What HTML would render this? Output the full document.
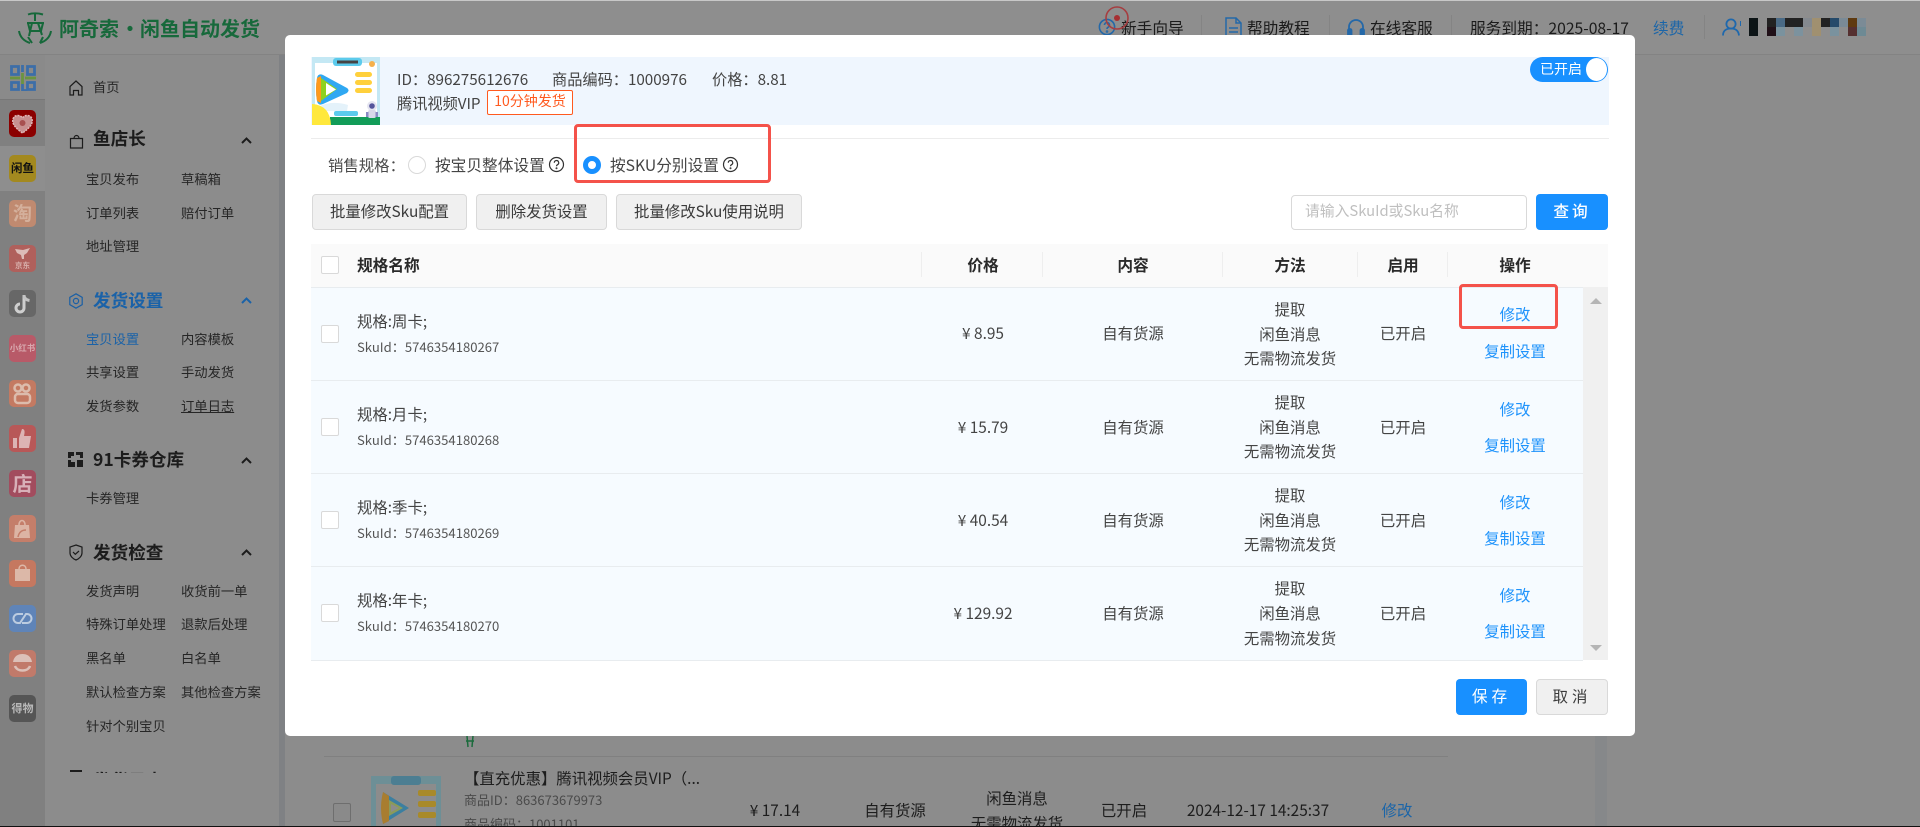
<!DOCTYPE html>
<html lang="zh">
<head>
<meta charset="utf-8">
<title>阿奇索 · 闲鱼自动发货</title>
<style>
*{box-sizing:border-box}
html,body{margin:0;padding:0;width:1920px;height:827px;overflow:hidden;background:#8c8c8c}
body{position:relative;font-family:"Noto Sans CJK SC","Liberation Sans","WenQuanYi Zen Hei",sans-serif;color:#2b2b2b}
.a{position:absolute}
.t{position:absolute;white-space:nowrap;line-height:20px;height:20px}
.c{transform:translateX(-50%)}
.side{font-size:13.3px;color:#262626;margin-top:-1px}
.h{font-size:17.6px;font-weight:700;color:#1c1c1c;margin-top:-2px}
.i{position:absolute;left:9px;width:27px;height:27px;border-radius:5px;font-weight:700;text-align:center;overflow:hidden}
.hd{font-size:15.7px;color:#1b1b1b;margin-top:-1px}
.m{font-size:15.4px;color:#444}
.b{font-size:15.4px;color:#1f93fb}
.th{font-size:15.7px;font-weight:700;color:#2a2a2a}
.cb{position:absolute;left:321px;width:18px;height:18px;background:#fff;border:1px solid #d9d9d9;border-radius:2px}
.rowline{position:absolute;left:311px;width:1272px;height:1px;background:#e8ecef}
.btn{position:absolute;background:#f0f0f0;border:1px solid #d9d9d9;border-radius:4px;font-size:15.4px;color:#3a3a3a;text-align:center;line-height:32px;height:36px}
.thv{position:absolute;top:252px;width:1px;height:25px;background:#eeeeee}
.sku{font-size:13.1px;color:#555}
</style>
</head>
<body>
<div class="a" style="left:0;top:0;width:1920px;height:1px;background:#c8c8c8"></div>

<!-- header -->
<div class="a" style="left:0;top:1px;width:1920px;height:53px;background:#8e8e8e"></div>
<div class="a" style="left:0;top:54px;width:1920px;height:1px;background:#838383"></div>
<svg class="a" style="left:18px;top:12px" width="34" height="34" viewBox="0 0 34 34" fill="none" stroke="#16683a" stroke-width="2">
<path d="M10 2.500C14 1 20 1 25 2.500"/><path d="M17 2v7"/><path d="M9 11h17"/><path d="M10 11l2 8h11l2-8"/>
<path d="M14 11l-3 13"/><path d="M20 11l4 12"/><path d="M1 19c1 6 5 10 11 12"/><path d="M33 19c-1 6-5 10-11 12"/><path d="M10 25l4 6"/><path d="M25 25l-3 6"/>
</svg>
<div class="t" style="left:59px;top:18px;font-size:20px;font-weight:700;color:#17693b">阿奇索</div>
<div class="t" style="left:120px;top:18px;width:20px;text-align:center;font-size:20px;font-weight:700;color:#17693b">·</div>
<div class="t" style="left:140px;top:18px;font-size:20px;font-weight:700;color:#17693b">闲鱼自动发货</div>

<svg class="a" style="left:1098px;top:18px" width="20" height="20" viewBox="0 0 20 20" fill="none" stroke="#2468a8" stroke-width="1.600"><circle cx="9" cy="9" r="7.600"/><path d="M6.500 7a2.500 2.500 0 1 1 3.500 2.300c-.8.400-1 .8-1 1.700"/><circle cx="9" cy="13.500" r=".5"/></svg>
<div class="t hd" style="left:1121px;top:19px">新手向导</div>
<svg class="a" style="left:1103px;top:4px" width="28" height="28" viewBox="0 0 28 28" fill="none"><circle cx="14" cy="14" r="11" stroke="#a63d40" stroke-width="1.600"/><circle cx="14" cy="14" r="3" fill="#a62f32"/></svg>
<div class="a" style="left:1201px;top:15px;width:1px;height:24px;background:#848484"></div>
<svg class="a" style="left:1225px;top:17px" width="17" height="21" viewBox="0 0 17 21" fill="none" stroke="#2468a8" stroke-width="1.500"><path d="M1 1h10l5 5v14H1z"/><path d="M11 1v5h5"/><path d="M4 11h9M4 15h9"/></svg>
<div class="t hd" style="left:1247px;top:19px">帮助教程</div>
<div class="a" style="left:1329px;top:15px;width:1px;height:24px;background:#848484"></div>
<svg class="a" style="left:1347px;top:18px" width="18" height="20" viewBox="0 0 18 20" fill="none" stroke="#2468a8" stroke-width="1.800"><path d="M2 13V9a7 7 0 0 1 14 0v4"/><rect x="1" y="11" width="3.500" height="7" rx="1.400" fill="#2468a8"/><rect x="13.500" y="11" width="3.500" height="7" rx="1.400" fill="#2468a8"/></svg>
<div class="t hd" style="left:1370px;top:19px">在线客服</div>
<div class="a" style="left:1451px;top:15px;width:1px;height:24px;background:#848484"></div>
<div class="t hd" style="left:1470px;top:19px">服务到期：2025-08-17</div>
<div class="t hd" style="left:1653px;top:19px;color:#1b65a8">续费</div>
<div class="a" style="left:1704px;top:15px;width:1px;height:24px;background:#848484"></div>
<svg class="a" style="left:1722px;top:18px" width="20" height="18" viewBox="0 0 20 18" fill="none" stroke="#1e68ad" stroke-width="1.800"><circle cx="9" cy="6" r="4.600"/><path d="M1 17.500c0-5 3.500-7 8-7s7.500 2 8 7"/><path d="M18.500 3v5" stroke-width="1"/></svg>
<div class="a" style="left:1749px;top:18px;width:9px;height:18px;background:#0c1416"></div>
<div class="a" style="left:1767px;top:18px;width:9px;height:9px;background:#222"></div>
<div class="a" style="left:1767px;top:27px;width:9px;height:9px;background:#201018"></div>
<div class="a" style="left:1776px;top:18px;width:9px;height:9px;background:#4a6a85"></div>
<div class="a" style="left:1776px;top:27px;width:9px;height:9px;background:#7a929e"></div>
<div class="a" style="left:1785px;top:18px;width:18px;height:9px;background:#222"></div>
<div class="a" style="left:1794px;top:27px;width:9px;height:9px;background:#7c929e"></div>
<div class="a" style="left:1803px;top:18px;width:9px;height:9px;background:#84898f"></div>
<div class="a" style="left:1812px;top:18px;width:9px;height:18px;background:#a09070"></div>
<div class="a" style="left:1821px;top:18px;width:9px;height:9px;background:#222"></div>
<div class="a" style="left:1830px;top:18px;width:9px;height:9px;background:#254a6a"></div>
<div class="a" style="left:1830px;top:27px;width:9px;height:9px;background:#7a929e"></div>
<div class="a" style="left:1839px;top:18px;width:9px;height:9px;background:#7a8a96"></div>
<div class="a" style="left:1848px;top:18px;width:9px;height:9px;background:#5f3a10"></div>
<div class="a" style="left:1848px;top:27px;width:9px;height:9px;background:#553030"></div>
<div class="a" style="left:1857px;top:18px;width:9px;height:9px;background:#7b8b96"></div>
<div class="a" style="left:1857px;top:27px;width:9px;height:9px;background:#6e8a94"></div>

<!-- left icon rail -->
<div class="a" style="left:0;top:55px;width:45px;height:772px;background:#808080"></div>
<div class="a" style="left:0;top:55px;width:45px;height:45px;background:#8a8a8a;border-bottom:1px solid #777"></div>
<div class="a" style="left:0;top:146px;width:45px;height:45px;background:#8e8e8e"></div>
<div class="a" style="left:279px;top:55px;width:6px;height:772px;background:#7f8184"></div>
<div class="a" style="left:1595px;top:55px;width:12px;height:772px;background:#86888a"></div>

<svg class="a" style="left:10px;top:65px" width="26" height="26" viewBox="0 0 26 26" fill="none" stroke-width="2.800"><path stroke="#3c6ea8" d="M1.500 1.500h7v8h-7zM12.500 0v7M17.500 1.500h7v8h-7z"/><path stroke="#6a9440" d="M0 13h10M15 13h11M12.500 8v11"/><path stroke="#3c6ea8" d="M1.500 17.500h7v7h-7zM12.500 19v6.500h5M17.500 17.500h7v7h-7z"/></svg>

<div class="i" style="top:110px;background:#8b0000"><svg width="27" height="27" viewBox="0 0 27 27"><path d="M13.500 23C5 17 3 13 4 9c1-4 7-5 9.500-1C16 4 22 5 23 9c1 4-1 8-9.500 14z" fill="#c89090" stroke="#e0b8b8" stroke-width="1.500" stroke-dasharray="2 1"/><circle cx="13.500" cy="13" r="3" fill="#a85050"/></svg></div>
<div class="i" style="top:155px;background:#a3891f;color:#111;font-size:11.500px;line-height:27px">闲鱼</div>
<div class="i" style="top:200px;background:#c08a70;font-size:19px;line-height:26px;color:#d4b09c">淘</div>
<div class="i" style="top:245px;background:#b0605c;font-size:7.500px;padding-top:15px;line-height:11px;color:#d8b0ac">京东<svg class="a" style="left:5px;top:2px" width="17" height="13" viewBox="0 0 17 13"><path d="M1 2l8 1 7-2-3 5-3 2v4H8L7 8 3 6z" fill="#dcbcb8"/></svg></div>
<div class="i" style="top:290px;background:#676767"><svg width="27" height="27" viewBox="0 0 27 27" fill="none"><path d="M15 5v13a4 4 0 1 1-4-4" stroke="#cfcfcf" stroke-width="3"/><path d="M15 5c0 3 2 5 5.500 5.500" stroke="#c4c4c4" stroke-width="3"/></svg></div>
<div class="i" style="top:335px;background:#b85a68;font-size:8.500px;line-height:27px;color:#d8a8ae">小红书</div>
<div class="i" style="top:380px;background:#c47a62"><svg width="27" height="27" viewBox="0 0 27 27" fill="none" stroke="#dcbcac" stroke-width="2.500"><circle cx="9" cy="8" r="3.500"/><circle cx="17" cy="8" r="3.500"/><rect x="6" y="14" width="15" height="9" rx="3"/></svg></div>
<div class="i" style="top:425px;background:#b85858"><svg width="27" height="27" viewBox="0 0 27 27" fill="#dcb4b4"><rect x="4" y="13" width="4" height="10"/><path d="M10 13l3-9c3 0 3 3 2 7h7l-2 12H10z"/></svg></div>
<div class="i" style="top:470px;background:#a24c5e;font-size:20px;line-height:26px;color:#d8b0b8">店</div>
<div class="i" style="top:515px;background:#c47e6a"><svg width="27" height="27" viewBox="0 0 27 27" fill="none"><path d="M6 10h14l1 13H5z" fill="#dcb4a4"/><path d="M10 10c0-6 6-6 6 0" stroke="#dcb4a4" stroke-width="1.600"/><path d="M9 22c1-5 4-7 8-7" stroke="#c47e6a" stroke-width="1.500"/></svg></div>
<div class="i" style="top:560px;background:#c57860"><svg width="27" height="27" viewBox="0 0 27 27" fill="#dcb8a8"><path d="M6 9h15v12H6z"/><path d="M10 9c0-5 7-5 7 0" fill="none" stroke="#dcb8a8" stroke-width="1.500"/></svg></div>
<div class="i" style="top:605px;background:#5f84b8"><svg width="27" height="27" viewBox="0 0 27 27" fill="none" stroke="#bccce0" stroke-width="2"><path d="M14 9H9a4.500 4.500 0 0 0 0 9h2l6-9h1a4.500 4.500 0 0 1 0 9h-5"/></svg></div>
<div class="i" style="top:650px;background:#c17a6a"><svg width="27" height="27" viewBox="0 0 27 27" fill="none"><path d="M4 12c1-6 5-8 9.500-8S22 6 23 12z" fill="#dcc0b8"/><path d="M6 16c2 6 13 6 15 0" stroke="#dcc0b8" stroke-width="2.500"/></svg></div>
<div class="i" style="top:695px;background:#555;font-size:11px;line-height:26px;color:#b8b8b8">得物</div>

<!-- side menu -->
<svg class="a" style="left:68px;top:80px" width="16" height="16" viewBox="0 0 16 16" fill="none" stroke="#1c1c1c" stroke-width="1.200"><path d="M2 15V6.500L8 1l6 5.500V15h-3.500v-4.500h-5V15z"/></svg>
<div class="t side" style="left:93px;top:78px">首页</div>

<svg class="a" style="left:69px;top:134px" width="15" height="15" viewBox="0 0 15 15" fill="none" stroke="#1c1c1c" stroke-width="1.200"><path d="M1.500 4.500h12V14h-12z"/><path d="M5 4.500c0-4 5-4 5 0"/></svg>
<div class="t h" style="left:93px;top:131px">鱼店长</div>
<svg class="a" style="left:241px;top:137px" width="11" height="7" viewBox="0 0 11 7" fill="none" stroke="#1c1c1c" stroke-width="2"><path d="M1 6l4.500-4.500L10 6"/></svg>
<div class="t side" style="left:86px;top:170px">宝贝发布</div><div class="t side" style="left:181px;top:170px">草稿箱</div>
<div class="t side" style="left:86px;top:204px">订单列表</div><div class="t side" style="left:181px;top:204px">赔付订单</div>
<div class="t side" style="left:86px;top:237px">地址管理</div>

<svg class="a" style="left:68px;top:293px" width="16" height="16" viewBox="0 0 16 16" fill="none" stroke="#1a5fa5" stroke-width="1.200"><path d="M8 .8l6.200 3.600v7.200L8 15.200 1.800 11.600V4.400z"/><circle cx="8" cy="8" r="2.600"/></svg>
<div class="t h" style="left:93px;top:293px;color:#1a62a8">发货设置</div>
<svg class="a" style="left:241px;top:297px" width="11" height="7" viewBox="0 0 11 7" fill="none" stroke="#1a62a8" stroke-width="2"><path d="M1 6l4.500-4.500L10 6"/></svg>
<div class="t side" style="left:86px;top:330px;color:#1a62a8">宝贝设置</div><div class="t side" style="left:181px;top:330px">内容模板</div>
<div class="t side" style="left:86px;top:363px">共享设置</div><div class="t side" style="left:181px;top:363px">手动发货</div>
<div class="t side" style="left:86px;top:397px">发货参数</div><div class="t side" style="left:181px;top:397px;text-decoration:underline">订单日志</div>

<svg class="a" style="left:68px;top:452px" width="15" height="15" viewBox="0 0 15 15" fill="#1c1c1c"><path d="M0 0h6v4H3v2H0zM8 0h7v6h-3V3H8zM0 8h3v2h4v5H0zM9 8h6v7H9z"/></svg>
<div class="t h" style="left:93px;top:452px">91卡券仓库</div>
<svg class="a" style="left:241px;top:457px" width="11" height="7" viewBox="0 0 11 7" fill="none" stroke="#1c1c1c" stroke-width="2"><path d="M1 6l4.500-4.500L10 6"/></svg>
<div class="t side" style="left:86px;top:489px">卡券管理</div>

<svg class="a" style="left:69px;top:544px" width="14" height="17" viewBox="0 0 14 17" fill="none" stroke="#1c1c1c" stroke-width="1.200"><path d="M7 1l6 2v6c0 3-3 6-6 7-3-1-6-4-6-7V3z"/><path d="M4 8l2.300 2.300L10 7"/></svg>
<div class="t h" style="left:93px;top:545px">发货检查</div>
<svg class="a" style="left:241px;top:549px" width="11" height="7" viewBox="0 0 11 7" fill="none" stroke="#1c1c1c" stroke-width="2"><path d="M1 6l4.500-4.500L10 6"/></svg>
<div class="t side" style="left:86px;top:582px">发货声明</div><div class="t side" style="left:181px;top:582px">收货前一单</div>
<div class="t side" style="left:86px;top:615px">特殊订单处理</div><div class="t side" style="left:181px;top:615px">退款后处理</div>
<div class="t side" style="left:86px;top:649px">黑名单</div><div class="t side" style="left:181px;top:649px">白名单</div>
<div class="t side" style="left:86px;top:683px">默认检查方案</div><div class="t side" style="left:181px;top:683px">其他检查方案</div>
<div class="t side" style="left:86px;top:717px">针对个别宝贝</div>
<div class="a" style="left:60px;top:768px;width:200px;height:5px;overflow:hidden"><div class="t h" style="left:33px;top:3px;margin-top:0">发货日志</div><div class="a" style="left:10px;top:2px;width:12px;height:2px;background:#1c1c1c"></div></div>

<!-- background list -->
<svg class="a" style="left:464px;top:736px" width="12" height="12" viewBox="0 0 12 12" fill="none" stroke="#1b6b3c" stroke-width="1.500"><path d="M3 0l1 11M9 0L8 11M2 5h8"/></svg>
<div class="a" style="left:324px;top:756px;width:1124px;height:1px;background:#808080"></div>
<div class="a" style="left:333px;top:803px;width:18px;height:19px;background:#8a8a8a;border:1px solid #6e6e6e;border-radius:2px"></div>
<svg class="a" style="left:371px;top:776px" width="70" height="51" viewBox="0 0 70 51"><rect width="70" height="51" fill="#6d8f96"/><rect x="5" y="8" width="60" height="43" fill="#8c8c8c"/><rect x="20" y="0" width="30" height="9" rx="3" fill="#4c7e92"/><path d="M12 16l26 16-26 16z" fill="#3c7fa0"/><path d="M12 16q-4 16 0 32l6-3V20z" fill="#a87d30"/><path d="M18 24l14 8-14 8z" fill="#8b9a5a"/><path d="M20 28l8 4-8 4z" fill="#8c8c8c"/><rect x="47" y="14" width="18" height="6" rx="2" fill="#a88a2a"/><rect x="47" y="25" width="18" height="6" rx="2" fill="#a88a2a"/><rect x="47" y="36" width="18" height="6" rx="2" fill="#a88a2a"/></svg>
<div class="t" style="left:464px;top:768px;font-size:15.400px;color:#1d1d1d">【直充优惠】腾讯视频会员VIP（...</div>
<div class="t" style="left:464px;top:790px;font-size:13px;color:#4a4a4a">商品ID：863673679973</div>
<div class="t" style="left:464px;top:814px;font-size:13px;color:#4a4a4a">商品编码：1001101</div>
<div class="t m c" style="left:775px;top:800px;color:#1d1d1d">¥ 17.14</div>
<div class="t m c" style="left:895px;top:800px;color:#1d1d1d">自有货源</div>
<div class="t m c" style="left:1017px;top:788px;color:#1d1d1d">闲鱼消息</div>
<div class="t m c" style="left:1017px;top:813px;color:#1d1d1d">无需物流发货</div>
<div class="t m c" style="left:1124px;top:800px;color:#1d1d1d">已开启</div>
<div class="t m c" style="left:1258px;top:800px;color:#1d1d1d">2024-12-17 14:25:37</div>
<div class="t c" style="left:1397px;top:800px;font-size:15.400px;color:#1b65a8">修改</div>

<!-- bottom edge -->
<div class="a" style="left:0;top:826px;width:1920px;height:1px;background:#111"></div>

<!-- modal -->
<div class="a" style="left:285px;top:35px;width:1350px;height:701px;background:#fff;border-radius:5px"></div>
<div class="a" style="left:311px;top:57px;width:1298px;height:68px;background:#eff6fe"></div>

<svg class="a" style="left:312px;top:57px" width="68" height="68" viewBox="0 0 68 68">
<rect width="68" height="68" fill="#c4e8f4"/><rect x="3" y="6" width="62" height="56" fill="#fff"/>
<rect x="21" y="1" width="29" height="8" rx="3" fill="#5ccbec"/><rect x="25" y="3.500" width="21" height="3" fill="#444"/>
<path d="M5 21q1-5 6-3l24 13q3 2 0 5L11 47q-5 2-6-3q-2-11 0-23z" fill="#2fa8f2"/>
<path d="M5 21q-2 11 0 23l4 2V19z" fill="#ff9a1c"/>
<path d="M9 21l16 11-16 12z" fill="#8ed11f"/><path d="M14 26l10 6.500-10 6z" fill="#fff"/>
<path d="M6 50q13-7 30-2l-1 6H10z" fill="#e4f2fa"/>
<rect x="43" y="15" width="17" height="5" rx="2.500" fill="#ffd03c"/><rect x="43" y="23" width="17" height="5" rx="2.500" fill="#ffd03c"/><rect x="43" y="31" width="17" height="5" rx="2.500" fill="#ffd03c"/>
<rect x="18" y="60" width="50" height="8" fill="#129c58"/><rect x="22" y="54" width="24" height="5" rx="2" fill="#5ccbec"/>
<path d="M0 47q18 1 19 21H0z" fill="#ffe83c"/>
<circle cx="60" cy="49" r="5" fill="#e4e4f0"/><circle cx="60" cy="49" r="2.800" fill="#54549a"/><rect x="56" y="53" width="8" height="8" rx="2" fill="#d8d8ea"/><rect x="54" y="55" width="2.500" height="5" fill="#8a8ac4"/><rect x="63.500" y="55" width="2.500" height="5" fill="#8a8ac4"/>
<circle cx="60" cy="7" r="3" fill="#f5b04c"/>
</svg>

<div class="t" style="left:397px;top:69px;font-size:15.200px;color:#444">ID：896275612676</div>
<div class="t" style="left:552px;top:69px;font-size:15.200px;color:#444">商品编码：1000976</div>
<div class="t" style="left:712px;top:69px;font-size:15.200px;color:#444">价格：8.81</div>
<div class="t" style="left:397px;top:93px;font-size:15.200px;color:#444">腾讯视频VIP</div>
<div class="a" style="left:487px;top:90px;width:86px;height:25px;border:1px solid #ff5a1f;border-radius:2px;background:#fff;font-size:14px;color:#ff5a1f;text-align:center;line-height:21px">10分钟发货</div>

<div class="a" style="left:1530px;top:57px;width:78px;height:25px;border-radius:13px;background:#1890ff"></div>
<div class="a" style="left:1586px;top:58px;width:21px;height:23px;border-radius:50%;background:#fff"></div>
<div class="t" style="left:1540px;top:59px;font-size:14px;color:#fff">已开启</div>

<div class="a" style="left:311px;top:138px;width:1298px;height:1px;background:#ececec"></div>

<div class="t m" style="left:328px;top:155px;color:#4a4a4a">销售规格：</div>
<div class="a" style="left:408px;top:156px;width:18px;height:18px;border:1px solid #d9d9d9;border-radius:50%;background:#fff"></div>
<div class="t m" style="left:435px;top:155px;font-size:15.700px">按宝贝整体设置</div>
<svg class="a" style="left:548px;top:156px" width="17" height="17" viewBox="0 0 17 17" fill="none" stroke="#333" stroke-width="1.200"><circle cx="8.500" cy="8.500" r="7"/><path d="M6.300 6.700a2.200 2.200 0 1 1 3.200 2c-.7.400-1 .7-1 1.500"/><circle cx="8.500" cy="12.300" r=".4"/></svg>
<div class="a" style="left:583px;top:156px;width:18px;height:18px;border-radius:50%;border:5px solid #1890ff;background:#fff"></div>
<div class="t m" style="left:610px;top:155px;font-size:15.700px">按SKU分别设置</div>
<svg class="a" style="left:722px;top:156px" width="17" height="17" viewBox="0 0 17 17" fill="none" stroke="#333" stroke-width="1.200"><circle cx="8.500" cy="8.500" r="7"/><path d="M6.300 6.700a2.200 2.200 0 1 1 3.200 2c-.7.400-1 .7-1 1.500"/><circle cx="8.500" cy="12.300" r=".4"/></svg>
<div class="a" style="left:574px;top:124px;width:197px;height:59px;border:3px solid #f4524a;border-radius:4px"></div>

<div class="btn" style="left:312px;top:194px;width:155px">批量修改Sku配置</div>
<div class="btn" style="left:476px;top:194px;width:131px">删除发货设置</div>
<div class="btn" style="left:616px;top:194px;width:186px">批量修改Sku使用说明</div>

<div class="a" style="left:1291px;top:195px;width:236px;height:35px;border:1px solid #d9d9d9;border-radius:4px;background:#fff"></div>
<div class="t" style="left:1305px;top:201px;font-size:14.800px;color:#bfbfbf">请输入SkuId或Sku名称</div>
<div class="a" style="left:1536px;top:194px;width:72px;height:36px;background:#1890ff;border-radius:4px;color:#fff;font-size:15.700px;text-align:center;line-height:34px;letter-spacing:3px;font-weight:500">查询</div>

<!-- table -->
<div class="a" style="left:311px;top:244px;width:1297px;height:43px;background:#fafafa"></div>
<div class="a" style="left:311px;top:287px;width:1272px;height:373px;background:#f6fbff"></div>
<div class="a" style="left:1583px;top:287px;width:25px;height:373px;background:#f0f0f0"></div>
<div class="a" style="left:311px;top:287px;width:1272px;height:1px;background:#e8ecef"></div>
<div class="rowline" style="top:380px"></div>
<div class="rowline" style="top:473px"></div>
<div class="rowline" style="top:566px"></div>
<div class="rowline" style="top:660px"></div>
<div class="thv" style="left:921px"></div><div class="thv" style="left:1042px"></div><div class="thv" style="left:1222px"></div><div class="thv" style="left:1357px"></div><div class="thv" style="left:1447px"></div>
<div class="a" style="left:1590px;top:298px;width:0;height:0;border-left:6px solid transparent;border-right:6px solid transparent;border-bottom:6px solid #b5b5b5"></div>
<div class="a" style="left:1590px;top:645px;width:0;height:0;border-left:6px solid transparent;border-right:6px solid transparent;border-top:6px solid #b5b5b5"></div>

<div class="cb" style="top:256px"></div>
<div class="t th" style="left:357px;top:255px">规格名称</div>
<div class="t th c" style="left:983px;top:255px">价格</div>
<div class="t th c" style="left:1133px;top:255px">内容</div>
<div class="t th c" style="left:1290px;top:255px">方法</div>
<div class="t th c" style="left:1403px;top:255px">启用</div>
<div class="t th c" style="left:1515px;top:255px">操作</div>

<!-- row 1 -->
<div class="cb" style="top:325px"></div>
<div class="t m" style="left:357px;top:311px">规格:周卡;</div>
<div class="t sku" style="left:357px;top:337px">SkuId：5746354180267</div>
<div class="t m c" style="left:983px;top:323px">¥ 8.95</div>
<div class="t m c" style="left:1133px;top:323px">自有货源</div>
<div class="t m c" style="left:1290px;top:299px">提取</div>
<div class="t m c" style="left:1290px;top:324px">闲鱼消息</div>
<div class="t m c" style="left:1290px;top:348px">无需物流发货</div>
<div class="t m c" style="left:1403px;top:323px">已开启</div>
<div class="t b c" style="left:1515px;top:304px">修改</div>
<div class="t b c" style="left:1515px;top:341px">复制设置</div>
<div class="a" style="left:1459px;top:284px;width:99px;height:45px;border:3px solid #f4524a;border-radius:4px"></div>

<!-- row 2 -->
<div class="cb" style="top:418px"></div>
<div class="t m" style="left:357px;top:404px">规格:月卡;</div>
<div class="t sku" style="left:357px;top:430px">SkuId：5746354180268</div>
<div class="t m c" style="left:983px;top:417px">¥ 15.79</div>
<div class="t m c" style="left:1133px;top:417px">自有货源</div>
<div class="t m c" style="left:1290px;top:392px">提取</div>
<div class="t m c" style="left:1290px;top:417px">闲鱼消息</div>
<div class="t m c" style="left:1290px;top:441px">无需物流发货</div>
<div class="t m c" style="left:1403px;top:417px">已开启</div>
<div class="t b c" style="left:1515px;top:399px">修改</div>
<div class="t b c" style="left:1515px;top:435px">复制设置</div>

<!-- row 3 -->
<div class="cb" style="top:511px"></div>
<div class="t m" style="left:357px;top:497px">规格:季卡;</div>
<div class="t sku" style="left:357px;top:523px">SkuId：5746354180269</div>
<div class="t m c" style="left:983px;top:510px">¥ 40.54</div>
<div class="t m c" style="left:1133px;top:510px">自有货源</div>
<div class="t m c" style="left:1290px;top:485px">提取</div>
<div class="t m c" style="left:1290px;top:510px">闲鱼消息</div>
<div class="t m c" style="left:1290px;top:534px">无需物流发货</div>
<div class="t m c" style="left:1403px;top:510px">已开启</div>
<div class="t b c" style="left:1515px;top:492px">修改</div>
<div class="t b c" style="left:1515px;top:528px">复制设置</div>

<!-- row 4 -->
<div class="cb" style="top:604px"></div>
<div class="t m" style="left:357px;top:590px">规格:年卡;</div>
<div class="t sku" style="left:357px;top:616px">SkuId：5746354180270</div>
<div class="t m c" style="left:983px;top:603px">¥ 129.92</div>
<div class="t m c" style="left:1133px;top:603px">自有货源</div>
<div class="t m c" style="left:1290px;top:578px">提取</div>
<div class="t m c" style="left:1290px;top:603px">闲鱼消息</div>
<div class="t m c" style="left:1290px;top:628px">无需物流发货</div>
<div class="t m c" style="left:1403px;top:603px">已开启</div>
<div class="t b c" style="left:1515px;top:585px">修改</div>
<div class="t b c" style="left:1515px;top:621px">复制设置</div>

<div class="a" style="left:1456px;top:679px;width:71px;height:36px;background:#1890ff;border-radius:4px;color:#fff;font-size:15.700px;text-align:center;line-height:34px;letter-spacing:4px">保存</div>
<div class="btn" style="left:1536px;top:679px;width:72px;letter-spacing:4px">取消</div>
</body>
</html>
